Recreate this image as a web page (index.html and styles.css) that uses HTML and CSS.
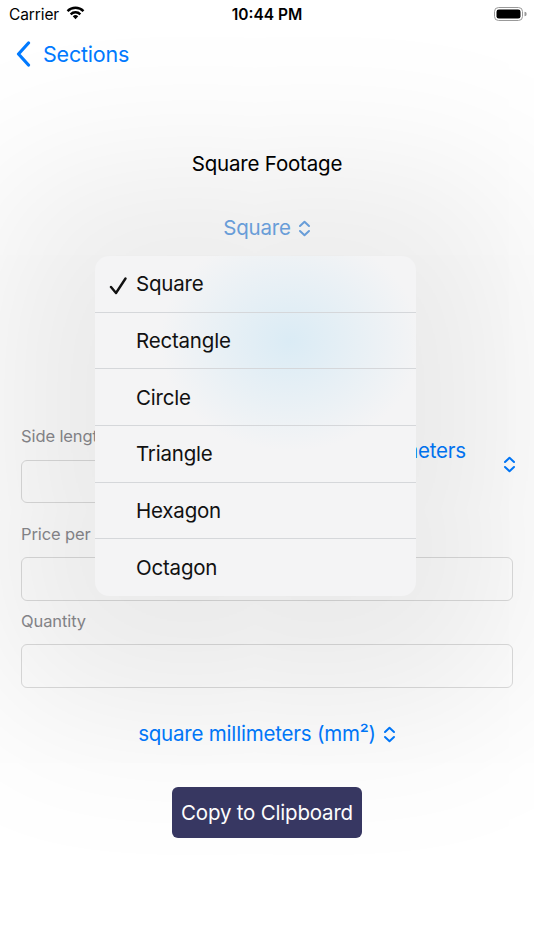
FILE: index.html
```html
<!DOCTYPE html>
<html>
<head>
<meta charset="utf-8">
<link rel="stylesheet" href="styles.css">
</head>
<body>
<div class="screen">
  <div class="status">
    <div class="status-left">
      <span class="carrier">Carrier</span>
      <svg class="wifi" width="21" height="15" viewBox="0 0 20 14">
        <path d="M10 13.5 L12.6 10.6 A3.8 3.8 0 0 0 7.4 10.6 Z" fill="#000"/>
        <path d="M4.6 7.9 A7.6 7.6 0 0 1 15.4 7.9 L13.8 9.6 A5.4 5.4 0 0 0 6.2 9.6 Z" fill="#000"/>
        <path d="M1.6 4.8 A11.8 11.8 0 0 1 18.4 4.8 L16.8 6.5 A9.5 9.5 0 0 0 3.2 6.5 Z" fill="#000"/>
      </svg>
    </div>
    <div class="time">10:44 PM</div>
    <div class="status-right">
      <svg width="33" height="14" viewBox="0 0 33 14">
        <rect x="0.5" y="0.5" width="28" height="13" rx="4" fill="none" stroke="#999" stroke-width="1"/>
        <rect x="2.5" y="2.5" width="24" height="9" rx="2.3" fill="#000"/>
        <path d="M30.5 4.8 A2.2 2.2 0 0 1 30.5 9.2 Z" fill="#999"/>
      </svg>
    </div>
  </div>

  <div class="nav">
    <svg class="back" width="15" height="26" viewBox="0 0 15 26">
      <path d="M12.5 2 L2.5 13 L12.5 24" fill="none" stroke="#007aff" stroke-width="3.2" stroke-linecap="round" stroke-linejoin="round"/>
    </svg>
    <span class="nav-title">Sections</span>
  </div>

  <main class="content">
    <h1 class="title">Square Footage</h1>
    <div class="picker faded">Square
      <svg class="updown" width="13" height="17" viewBox="0 0 13 17"><path d="M2 6 L6.5 1.8 L11 6 M2 11 L6.5 15.2 L11 11" fill="none" stroke="currentColor" stroke-width="2" stroke-linecap="round" stroke-linejoin="round"/></svg>
    </div>

    <div class="form">
      <label class="label first">Side length</label>
      <div class="row">
        <div class="field short"></div>
        <div class="unit-picker">
          <span class="unit-text">Millimeters</span>
          <svg class="updown low" width="13" height="17" viewBox="0 0 13 17"><path d="M2 6 L6.5 1.8 L11 6 M2 11 L6.5 15.2 L11 11" fill="none" stroke="currentColor" stroke-width="2" stroke-linecap="round" stroke-linejoin="round"/></svg>
        </div>
      </div>
      <label class="label">Price per square meter</label>
      <div class="field"></div>
      <label class="label">Quantity</label>
      <div class="field"></div>
    </div>

    <div class="picker units">square millimeters (mm²)
      <svg class="updown" width="13" height="17" viewBox="0 0 13 17"><path d="M2 6 L6.5 1.8 L11 6 M2 11 L6.5 15.2 L11 11" fill="none" stroke="currentColor" stroke-width="2" stroke-linecap="round" stroke-linejoin="round"/></svg>
    </div>

    <div class="btn-wrap"><button class="copy">Copy to Clipboard</button></div>
  </main>

  <div class="menu">
    <div class="item"><span class="check">
      <svg width="18" height="18" viewBox="0 0 18 18"><path d="M2 10 L7 16 L16.5 1.5" fill="none" stroke="#111" stroke-width="2.4" stroke-linecap="round" stroke-linejoin="round"/></svg>
    </span>Square</div>
    <div class="item">Rectangle</div>
    <div class="item">Circle</div>
    <div class="item">Triangle</div>
    <div class="item">Hexagon</div>
    <div class="item last">Octagon</div>
  </div>
</div>
</body>
</html>
```

FILE: styles.css
```css
* { box-sizing: border-box; }
html, body { margin: 0; padding: 0; }
body {
  width: 534px;
  height: 950px;
  background: #ffffff;
  font-family: Inter, "Liberation Sans", sans-serif;
  overflow: hidden;
}
.screen {
  position: relative;
  width: 534px;
  height: 950px;
  overflow: hidden;
}
.status {
  height: 28px;
  display: flex;
  align-items: center;
  justify-content: space-between;
  padding: 0 7px 0 9px;
  position: relative;
}
.status-left { display: flex; align-items: center; gap: 6px; }
.carrier { font-size: 15.5px; color: #000; letter-spacing: -0.1px; }
.wifi { margin-top: -3px; }
.time {
  position: absolute;
  left: 0; right: 0;
  text-align: center;
  font-size: 15.5px;
  font-weight: 600;
  color: #000;
  pointer-events: none;
}
.status-right { display: flex; align-items: center; }

.nav {
  height: 52px;
  display: flex;
  align-items: center;
  padding-left: 16px;
  gap: 12px;
}
.nav-title { font-size: 21.5px; color: #007aff; letter-spacing: -0.2px; }

.content { padding: 0 21px; }
.title {
  margin: 71px 0 0;
  text-align: center;
  font-size: 20.5px;
  font-weight: 400;
  line-height: 26px;
  color: #000;
  letter-spacing: -0.2px;
}
.picker {
  display: flex;
  justify-content: center;
  align-items: center;
  gap: 7px;
  font-size: 20.5px;
  line-height: 26px;
  letter-spacing: -0.2px;
  color: #007aff;
}
.picker.faded { margin-top: 38px; color: #6fa7e6; }
.updown { display: block; }

.form { margin-top: 184px; }
.label {
  display: block;
  font-size: 16.5px;
  line-height: 22px;
  color: #8a8a8e;
  letter-spacing: -0.1px;
}
.row {
  display: flex;
  align-items: flex-start;
}
.field {
  height: 44px;
  border: 1px solid #dcdcdc;
  border-radius: 6px;
  margin: 12px 0 9px;
}
.field.short { width: 320px; height: 43px; margin-top: 13px; margin-bottom: 20px; }
.unit-picker {
  display: flex;
  align-items: flex-start;
  margin-left: auto;
  margin-right: -3px;
  color: #007aff;
  gap: 37px;
}
.unit-text { font-size: 20.5px; line-height: 26px; margin-top: -9px; letter-spacing: -0.2px; }
.updown.low { margin-top: 9px; }

.picker.units { margin-top: 33px; }
.btn-wrap { display: flex; justify-content: center; margin-top: 40px; }
.copy {
  width: 190px;
  height: 51px;
  border: none;
  border-radius: 6px;
  background: #383863;
  color: #fff;
  font-family: Inter, "Liberation Sans", sans-serif;
  font-size: 20.5px;
  letter-spacing: -0.2px;
  padding: 0;
}

.menu {
  position: absolute;
  left: 95px;
  top: 256px;
  width: 321px;
  height: 340px;
  border-radius: 14px;
  overflow: hidden;
  background:
    radial-gradient(ellipse 130px 110px at 195px 85px, rgba(214,234,245,0.85), rgba(214,234,245,0) 100%),
    #f4f4f5;
  box-shadow: 0 20px 170px 100px rgba(0,0,0,0.085);
}
.item {
  height: 56.67px;
  display: flex;
  align-items: center;
  padding-left: 41px;
  position: relative;
  font-size: 20.5px;
  color: #111;
  letter-spacing: -0.2px;
  border-bottom: 1px solid #d5d7da;
}
.item.last { border-bottom: none; }
.check {
  position: absolute;
  left: 14px;
  top: 19px;
  width: 18px;
  height: 18px;
}
```
